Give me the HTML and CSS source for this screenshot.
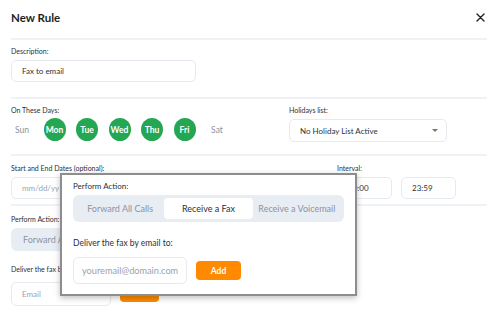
FILE: index.html
```html
<!DOCTYPE html>
<html lang="en">
<head>
  <meta charset="UTF-8">
  <meta name="viewport" content="width=device-width, initial-scale=1.0">
  <title>New Rule</title>
  <link rel="stylesheet" href="styles.css">
</head>
<body>
  <div class="modal">
    <div class="modal-header">
      <div class="modal-title">New Rule</div>
      <div class="close-btn">
        <svg width="9" height="9" viewBox="0 0 9 9"><path d="M1 1 L8 8 M8 1 L1 8" stroke="#222" stroke-width="1.4" stroke-linecap="round"/></svg>
      </div>
    </div>

    <div class="section sec-desc">
      <label>Description:</label>
      <div class="input input-desc">Fax to email</div>
    </div>

    <div class="section sec-days">
      <div class="col col-days">
        <label>On These Days:</label>
        <div class="days">
          <div class="day">Sun</div>
          <div class="day on">Mon</div>
          <div class="day on">Tue</div>
          <div class="day on">Wed</div>
          <div class="day on">Thu</div>
          <div class="day on">Fri</div>
          <div class="day">Sat</div>
        </div>
      </div>
      <div class="col">
        <label>Holidays list:</label>
        <div class="input select">
          <span>No Holiday List Active</span>
          <span class="caret"></span>
        </div>
      </div>
    </div>

    <div class="section sec-dates">
      <div class="col col-dates">
        <label>Start and End Dates (optional):</label>
        <div class="input input-date placeholder">mm/dd/yy</div>
      </div>
      <div class="col">
        <label>Interval:</label>
        <div class="times">
          <div class="input input-time">00:00</div>
          <div class="input input-time">23:59</div>
        </div>
      </div>
    </div>

    <div class="section sec-action">
      <label>Perform Action:</label>
      <div class="segmented back">
        <div class="seg">Forward All Calls</div>
        <div class="seg active">Receive a Fax</div>
        <div class="seg">Receive a Voicemail</div>
      </div>
      <label class="deliver-label">Deliver the fax by email to:</label>
      <div class="email-row">
        <div class="input input-email placeholder">Email</div>
        <div class="add-btn back-btn">Add</div>
      </div>
    </div>
  </div>

  <div class="popup">
    <div class="popup-label">Perform Action:</div>
    <div class="segmented">
      <div class="seg">Forward All Calls</div>
      <div class="seg active">Receive a Fax</div>
      <div class="seg">Receive a Voicemail</div>
    </div>
    <div class="popup-label deliver">Deliver the fax by email to:</div>
    <div class="email-row">
      <div class="input popup-email placeholder">youremail@domain.com</div>
      <div class="add-btn">Add</div>
    </div>
  </div>
</body>
</html>
```

FILE: styles.css
```css
body {
  margin: 0;
  font-family: 'Lato', 'Noto Sans', sans-serif;
  background-color: white;
  color: #2b2f38;
  width: 500px;
  height: 325px;
  overflow: hidden;
  position: relative;
}

.modal {
  padding: 0 13px 0 11px;
}

.modal-header {
  display: flex;
  align-items: center;
  justify-content: space-between;
  height: 35px;
  padding-bottom: 3px;
  border-bottom: 2px solid #eef1f6;
}

.modal-title {
  font-size: 11.5px;
  font-weight: 700;
  color: #1c1f26;
}

.close-btn {
  display: flex;
  margin-right: 2px;
}

.section {
  border-bottom: 2px solid #eef1f6;
}

label {
  display: block;
  font-size: 7px;
  line-height: 10px;
  color: #2b2f38;
  white-space: nowrap;
}

.input {
  box-sizing: border-box;
  border: 1px solid #e6e9f0;
  border-radius: 5px;
  font-size: 8px;
  color: #333;
  display: flex;
  align-items: center;
  padding-left: 10px;
  background: white;
  white-space: nowrap;
}

.placeholder {
  color: #9aa2b1;
}

.sec-desc {
  padding: 6px 0 15px;
}

.input-desc {
  margin-top: 4px;
  width: 185px;
  height: 22px;
}

.sec-days {
  display: flex;
  padding: 6px 0 12px;
}

.col-days {
  width: 278px;
}

.days {
  display: flex;
  gap: 10.5px;
  margin-top: 3px;
}

.day {
  width: 22px;
  height: 23px;
  border-radius: 50%;
  display: flex;
  align-items: center;
  justify-content: center;
  font-size: 8.5px;
  color: #8a93a5;
}

.day.on {
  background-color: #24a652;
  color: white;
  font-weight: 700;
}

.select {
  margin-top: 4px;
  width: 158px;
  height: 23px;
  justify-content: space-between;
  padding-right: 8px;
}

.caret {
  width: 0;
  height: 0;
  border-left: 3px solid transparent;
  border-right: 3px solid transparent;
  border-top: 3px solid #777;
}

.sec-dates {
  display: flex;
  padding: 7px 0 5px;
}

.col-dates {
  width: 326px;
}

.input-date {
  margin-top: 4px;
  width: 100px;
  height: 22px;
}

.times {
  display: flex;
  gap: 9px;
  margin-top: 4px;
}

.input-time {
  width: 55px;
  height: 22px;
}

.sec-action {
  border-bottom: none;
  padding-top: 8px;
}

.segmented {
  display: flex;
  background-color: #e8edf4;
  border-radius: 6px;
  padding: 3px;
}

.seg {
  flex: 1;
  display: flex;
  align-items: center;
  justify-content: center;
  font-size: 9px;
  color: #8a93a5;
  border-radius: 4px;
  white-space: nowrap;
  overflow: hidden;
}

.seg.active {
  background-color: white;
  color: #2b2f38;
}

.segmented.back {
  margin-top: 4px;
  width: 263px;
  height: 17px;
}

.segmented.back .seg {
  justify-content: flex-start;
  padding-left: 9px;
}

.deliver-label {
  margin-top: 13px;
}

.email-row {
  display: flex;
  align-items: center;
  gap: 9px;
}

.sec-action .email-row {
  margin-top: 8px;
  align-items: flex-start;
}

.input-email {
  width: 100px;
  height: 24px;
}

.add-btn {
  width: 45px;
  height: 19px;
  border-radius: 4px;
  background-color: #ff8a00;
  color: white;
  font-size: 8.5px;
  font-weight: 700;
  display: flex;
  align-items: center;
  justify-content: center;
}

.back-btn {
  width: 39px;
  margin-top: 1px;
}

.popup {
  position: absolute;
  left: 60px;
  top: 173px;
  width: 297px;
  height: 123px;
  box-sizing: border-box;
  border: 2px solid #8d8d8d;
  background: white;
  box-shadow: 0 2px 6px rgba(0, 0, 0, 0.25);
  padding: 5px 11px;
}

.popup-label {
  font-size: 8px;
  line-height: 12px;
  color: #2b2f38;
}

.popup .segmented {
  margin-top: 3px;
  height: 21px;
}

.popup-label.deliver {
  margin-top: 15px;
  font-size: 8.5px;
}

.popup .email-row {
  margin-top: 8px;
}

.popup-email {
  width: 114px;
  height: 27px;
  font-size: 9.2px;
  padding-left: 8px;
}
```
